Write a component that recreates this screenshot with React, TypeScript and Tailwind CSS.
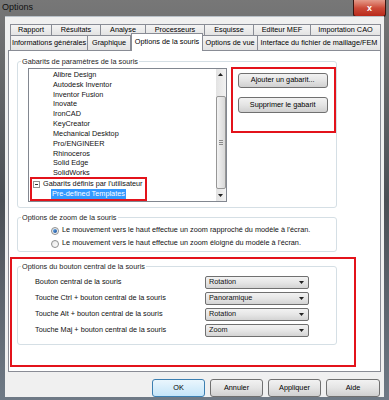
import React from "react";

const row1 = [
  { label: "Rapport", w: "w-[42px]" },
  { label: "Résultats", w: "w-[49px]" },
  { label: "Analyse", w: "w-[45px]" },
  { label: "Processeurs", w: "w-[59px]" },
  { label: "Esquisse", w: "w-[49px]" },
  { label: "Editeur MEF", w: "w-[57px]" },
  { label: "Importation CAO", w: "w-[70px]" },
];

const row2 = [
  { label: "Informations générales", w: "w-[78px]" },
  { label: "Graphique", w: "w-[43px]" },
  { label: "Options de la souris", w: "w-[72px]", active: true },
  { label: "Options de vue", w: "w-[55px]" },
  { label: "Interface du fichier de maillage/FEM", w: "w-[123px]" },
];

const templates = [
  "Alibre Design",
  "Autodesk Inventor",
  "Inventor Fusion",
  "Inovate",
  "IronCAD",
  "KeyCreator",
  "Mechanical Desktop",
  "Pro/ENGINEER",
  "Rhinoceros",
  "Solid Edge",
  "SolidWorks",
];

const mouseRows = [
  { label: "Bouton central de la souris", value: "Rotation" },
  { label: "Touche Ctrl + bouton central de la souris", value: "Panoramique" },
  { label: "Touche Alt + bouton central de la souris", value: "Rotation" },
  { label: "Touche Maj + bouton central de la souris", value: "Zoom" },
];

// bouton gris façon Windows 7
const WinButton = ({
  label,
  className,
  isDefault,
}: {
  label: string;
  className: string;
  isDefault?: boolean;
}) => (
  <div
    className={`flex items-center justify-center rounded-[3px] border text-[7.3px] text-black ${
      isDefault
        ? "border-[#3c7fb1] bg-linear-to-b from-[#eaf6fd] to-[#c4e5f9]"
        : "border-[#707070] bg-linear-to-b from-[#f2f2f2] via-[#e4e4e4] to-[#d0d0d0]"
    } ${className}`}
  >
    {label}
  </div>
);

const GroupBox = ({
  label,
  className,
  children,
}: {
  label: string;
  className: string;
  children: React.ReactNode;
}) => (
  <div className={`relative rounded-[3px] border border-[#d5dfe5] ${className}`}>
    <span className="absolute -top-[5px] left-[3px] bg-white px-[1px] text-[7.3px] leading-[9px] text-[#1e1e1e]">
      {label}
    </span>
    {children}
  </div>
);

const Arrow = ({ up }: { up?: boolean }) => (
  <svg width="5" height="3" viewBox="0 0 5 3">
    <path d={up ? "M0 3 L2.5 0 L5 3 Z" : "M0 0 L5 0 L2.5 3 Z"} fill="#222" />
  </svg>
);

const Radio = ({ checked }: { checked?: boolean }) => (
  <div className="flex h-[8px] w-[8px] items-center justify-center rounded-full border border-[#8e8f8f] bg-linear-to-br from-[#e6e6e6] to-[#ffffff]">
    {checked && (
      <div className="h-[4px] w-[4px] rounded-full bg-linear-to-br from-[#6fb2f0] to-[#14468f]" />
    )}
  </div>
);

export default function App() {
  return (
    <div className="flex h-[400px] w-[389px] flex-col bg-linear-to-b from-[#777777] via-[#4b4f55] to-[#6f7a86] font-['Liberation_Sans',Arial,sans-serif]">
      {/* barre de titre */}
      <div className="flex h-[16px] items-start justify-between">
        <span className="ml-[2px] mt-[2px] text-[9px] leading-[11px] text-[#111]">Options</span>
        <div className="mr-[3px] flex h-[17px] w-[33px] items-center justify-center rounded-b-[3px] border border-t-0 border-[#3a1510] bg-linear-to-b from-[#e49a8a] via-[#cc4a38] to-[#b8281a]">
          <span className="text-[9px] font-bold leading-none text-white">x</span>
        </div>
      </div>

      {/* zone cliente */}
      <div className="mx-[5px] flex flex-1 flex-col border-t border-[#b9c1c9] bg-[#f0f0f0] px-[3px] pt-[7px]">
        {/* onglets */}
        <div className="ml-[2px] flex h-[11px]">
          {row1.map((t) => (
            <div
              key={t.label}
              className={`flex items-center justify-center border-t border-r border-[#898c95] bg-linear-to-b from-[#f4f4f4] to-[#e3e3e3] text-[7.3px] text-black first:border-l ${t.w}`}
            >
              {t.label}
            </div>
          ))}
        </div>
        <div className="ml-[2px] flex h-[15px] items-end">
          {row2.map((t) =>
            t.active ? (
              <div
                key={t.label}
                className={`relative z-10 -mb-px flex h-[18px] items-center justify-center border-t border-r border-l border-[#898c95] bg-white text-[7.3px] text-black ${t.w}`}
              >
                {t.label}
              </div>
            ) : (
              <div
                key={t.label}
                className={`flex h-[15px] items-center justify-center border-t border-r border-[#898c95] bg-linear-to-b from-[#f4f4f4] to-[#e3e3e3] text-[7.3px] text-black first:border-l ${t.w}`}
              >
                {t.label}
              </div>
            )
          )}
        </div>

        {/* panneau */}
        <div className="flex h-[322px] flex-col border border-[#898c95] bg-white">
          <GroupBox label="Gabarits de paramètres de la souris" className="ml-[8px] mt-[10px] h-[147px] w-[320px]">
            <div className="ml-[10px] mt-[6px] flex items-start">
              {/* liste */}
              <div className="flex h-[134px] w-[200px] border border-[#828790] bg-white">
                <div className="flex-1 pt-[1px] text-[7.3px] leading-[9.83px] text-[#111]">
                  {templates.map((t) => (
                    <div key={t} className="h-[9.83px] pl-[24px]">
                      {t}
                    </div>
                  ))}
                  <div className="-mt-[1px] ml-[1px] w-[117px] border-2 border-[#e3131b]">
                    <div className="flex h-[9.83px] items-center">
                      <div className="ml-[1px] flex h-[7px] w-[7px] items-center justify-center border border-[#919191] bg-white">
                        <div className="h-px w-[3px] bg-[#333]" />
                      </div>
                      <span className="ml-[3px]">Gabarits définis par l'utilisateur</span>
                    </div>
                    <div className="flex h-[9.83px]">
                      <span className="ml-[19px] bg-[#3399ff] px-[1px] text-white">Pre-defined Templates</span>
                    </div>
                  </div>
                </div>
                {/* barre de défilement */}
                <div className="flex w-[10px] flex-col bg-linear-to-r from-[#e3e3e3] to-[#f2f2f2]">
                  <div className="flex h-[11px] items-center justify-center">
                    <Arrow up />
                  </div>
                  <div className="flex flex-1 flex-col">
                    <div className="mt-[16px] flex h-[93px] flex-col items-center justify-center gap-[1px] rounded-[2px] border border-[#979797] bg-linear-to-r from-[#f3f3f3] to-[#d8d8d8]">
                      <div className="h-px w-[4px] bg-[#8a8a8a]" />
                      <div className="h-px w-[4px] bg-[#8a8a8a]" />
                      <div className="h-px w-[4px] bg-[#8a8a8a]" />
                    </div>
                  </div>
                  <div className="flex h-[11px] items-center justify-center">
                    <Arrow />
                  </div>
                </div>
              </div>

              {/* boutons gabarit */}
              <div className="-mt-[1px] ml-[4px] flex h-[66px] w-[106px] flex-col border-2 border-[#e3131b] pl-[5px] pt-[4px]">
                <WinButton label="Ajouter un gabarit..." className="h-[15px] w-[90px]" />
                <WinButton label="Supprimer le gabarit" className="mt-[9px] h-[16px] w-[90px]" />
              </div>
            </div>
          </GroupBox>

          <GroupBox label="Options de zoom de la souris" className="ml-[8px] mt-[9px] h-[35px] w-[320px]">
            <div className="ml-[33px] mt-[6px] flex flex-col text-[7.3px] text-[#111]">
              <div className="flex h-[13px] items-center gap-[3px]">
                <Radio checked />
                <span>Le mouvement vers le haut effectue un zoom rapproché du modèle à l'écran.</span>
              </div>
              <div className="flex h-[13px] items-center gap-[3px]">
                <Radio />
                <span>Le mouvement vers le haut effectue un zoom éloigné du modèle à l'écran.</span>
              </div>
            </div>
          </GroupBox>

          <div className="ml-[1px] mt-[5px] h-[110px] w-[346px] border-2 border-[#e3131b] pl-[5px] pt-[7px]">
            <GroupBox label="Options du bouton central de la souris" className="h-[79px] w-[320px]">
              <div className="mt-[9px] flex flex-col gap-[3px] text-[7.3px] text-[#111]">
                {mouseRows.map((r) => (
                  <div key={r.label} className="flex h-[13px] items-center">
                    <span className="w-[187px] pl-[17px]">{r.label}</span>
                    <div className="flex h-[13px] w-[104px] items-center justify-between rounded-[2px] border border-[#707070] bg-linear-to-b from-[#f2f2f2] via-[#e6e6e6] to-[#d4d4d4] pl-[3px] pr-[4px]">
                      <span>{r.value}</span>
                      <Arrow />
                    </div>
                  </div>
                ))}
              </div>
            </GroupBox>
          </div>
        </div>

        {/* boutons du bas */}
        <div className="mt-[7px] flex justify-end gap-[5px] pr-[1px]">
          <WinButton label="OK" className="h-[18px] w-[53px]" isDefault />
          <WinButton label="Annuler" className="h-[18px] w-[53px]" />
          <WinButton label="Appliquer" className="h-[18px] w-[53px]" />
          <WinButton label="Aide" className="h-[18px] w-[54px]" />
        </div>
      </div>
      <div className="h-[3px]" />
    </div>
  );
}
